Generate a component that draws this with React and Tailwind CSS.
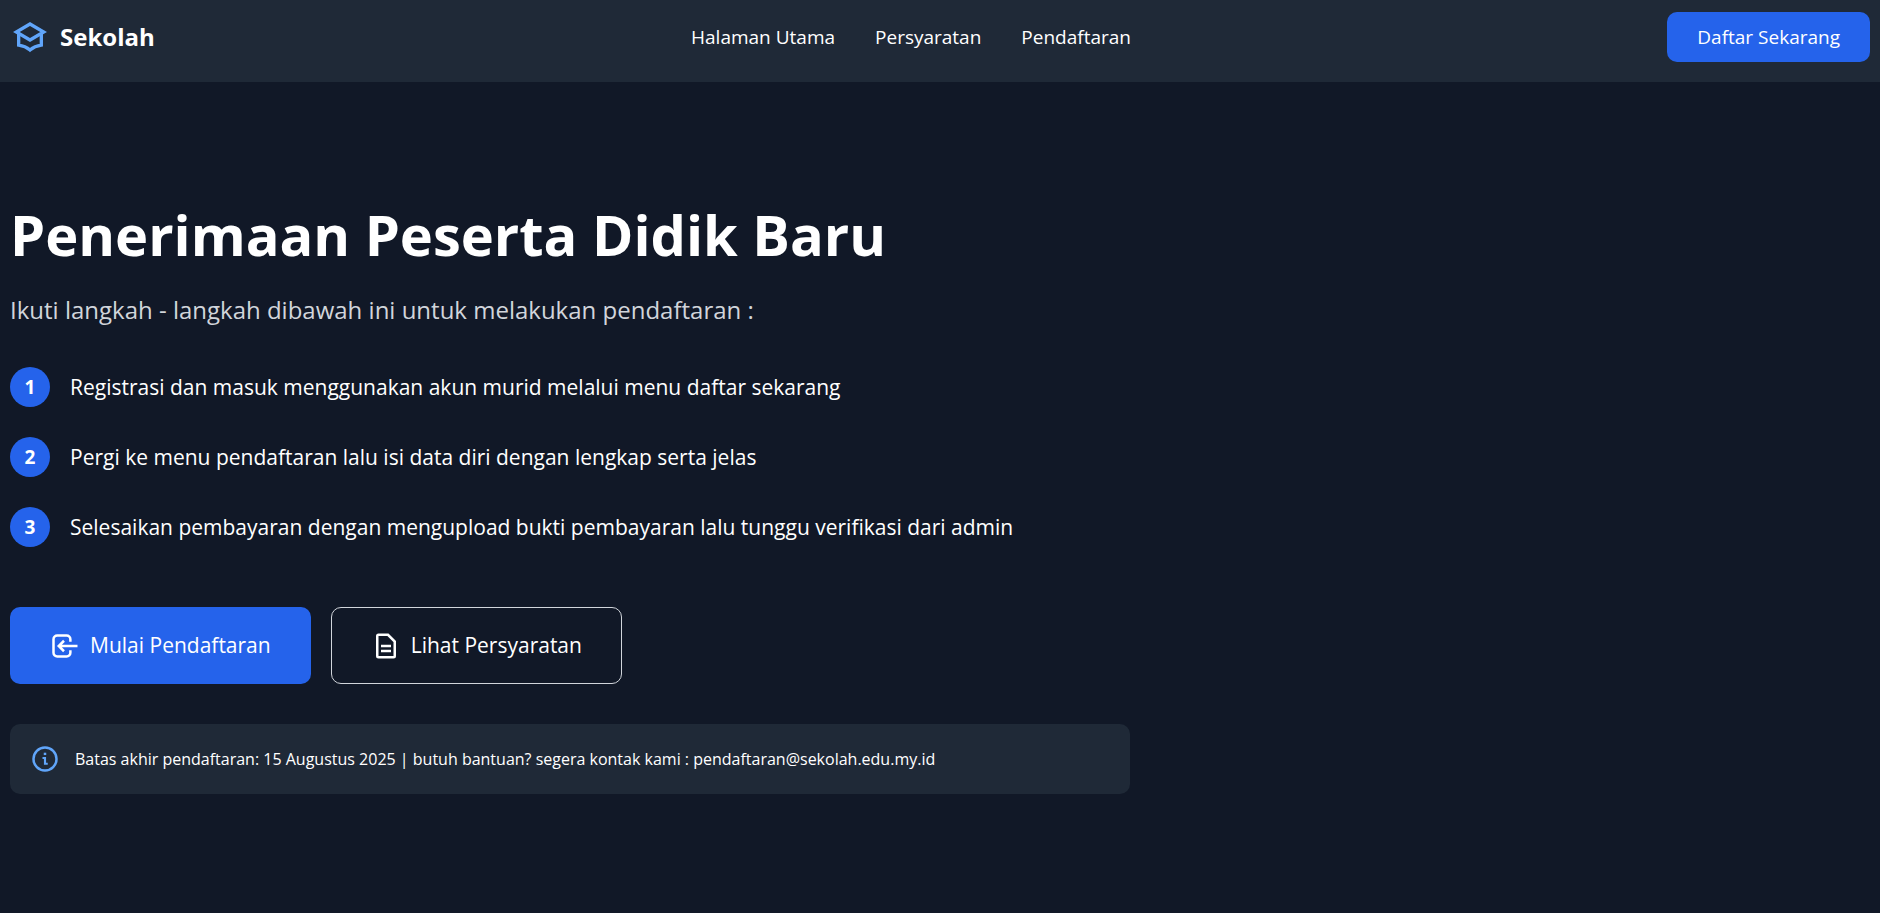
const navLinks = ['Halaman Utama', 'Persyaratan', 'Pendaftaran'];

const steps = [
  'Registrasi dan masuk menggunakan akun murid melalui menu daftar sekarang',
  'Pergi ke menu pendaftaran lalu isi data diri dengan lengkap serta jelas',
  'Selesaikan pembayaran dengan mengupload bukti pembayaran lalu tunggu verifikasi dari admin',
];

function Icon({ className, children }) {
  return (
    <svg
      className={className}
      viewBox="0 0 24 24"
      fill="none"
      stroke="currentColor"
      strokeWidth="2"
      aria-hidden="true"
    >
      {children}
    </svg>
  );
}

function GraduationIcon() {
  return (
    <Icon className="size-10 shrink-0 text-[#60a5fa]">
      <path d="M12 4.200 3.800 9l8.200 4.800L20.200 9z" />
      <path d="M5.200 10v6.900q4 .6 6.800 2.900q2.800-2.300 6.800-2.900V10" />
    </Icon>
  );
}

function EnterIcon() {
  return (
    <Icon className="size-[30px] shrink-0">
      <path d="M16.300 8.600V6.600a3 3 0 0 0-3-3H5.800a3 3 0 0 0-3 3v10.800a3 3 0 0 0 3 3h7.500a3 3 0 0 0 3-3v-2" />
      <path d="M22 12H7.500M11.200 7.800 7 12l4.200 4.200" />
    </Icon>
  );
}

function FileIcon() {
  return (
    <Icon className="size-[30px] shrink-0">
      <path d="M6 3h7.600L19 8.400V20a1 1 0 0 1-1 1H6a1 1 0 0 1-1-1V4a1 1 0 0 1 1-1z" />
      <path d="M8 12h8M8 16h8" />
    </Icon>
  );
}

function InfoIcon() {
  return (
    <Icon className="size-[30px] shrink-0 text-[#60a5fa]">
      <circle cx="12" cy="12" r="9.200" />
      <path d="M10 11.200h2v4.600h2.200" strokeWidth="1.700" />
      <path d="M11 7.900h2" strokeWidth="1.900" />
    </Icon>
  );
}

export default function App() {
  return (
    <div className="flex min-h-screen flex-col bg-[#111827] font-['Open_Sans','Noto_Sans',sans-serif] text-white">
      <header className="flex justify-between bg-[#1f2937] px-[10px] pt-3 pb-5">
        <a href="#" className="flex items-center gap-[10px] text-2xl font-bold">
          <GraduationIcon />
          Sekolah
        </a>
        <nav className="flex items-center gap-10 text-[19px]">
          {navLinks.map((label) => (
            <a key={label} href="#">
              {label}
            </a>
          ))}
        </nav>
        <a
          href="#"
          className="rounded-[10px] bg-[#2563eb] px-[30px] py-[10px] text-[19px] leading-[30px]"
        >
          Daftar Sekarang
        </a>
      </header>

      <main className="flex flex-1 flex-col items-start justify-center px-[10px] pb-1">
        <h1 className="text-[56px] leading-[75px] font-bold">Penerimaan Peserta Didik Baru</h1>
        <p className="mt-5 text-2xl leading-[35px] text-[#d1d5db]">
          Ikuti langkah - langkah dibawah ini untuk melakukan pendaftaran :
        </p>
        <ol className="mt-10 flex flex-col gap-[30px]">
          {steps.map((step, index) => (
            <li key={step} className="flex items-center gap-5 text-[21px] leading-[35px]">
              <span className="flex size-10 shrink-0 items-center justify-center rounded-full bg-[#2563eb] text-[19px] font-bold">
                {index + 1}
              </span>
              {step}
            </li>
          ))}
        </ol>
        <div className="mt-[60px] flex flex-wrap gap-5 text-[21px] leading-[37px]">
          <a href="#" className="flex items-center gap-[10px] rounded-[10px] bg-[#2563eb] px-10 py-5">
            <EnterIcon />
            Mulai Pendaftaran
          </a>
          <a
            href="#"
            className="flex items-center gap-[10px] rounded-[10px] border border-[#d1d5db] px-[39px] py-[19px]"
          >
            <FileIcon />
            Lihat Persyaratan
          </a>
        </div>
        <div className="mt-10 flex w-full max-w-[1120px] items-center gap-[15px] rounded-[10px] bg-[#1f2937] p-5 text-[16px] leading-[30px]">
          <InfoIcon />
          <p>
            Batas akhir pendaftaran: 15 Augustus 2025 | butuh bantuan? segera kontak kami :
            pendaftaran@sekolah.edu.my.id
          </p>
        </div>
      </main>
    </div>
  );
}
